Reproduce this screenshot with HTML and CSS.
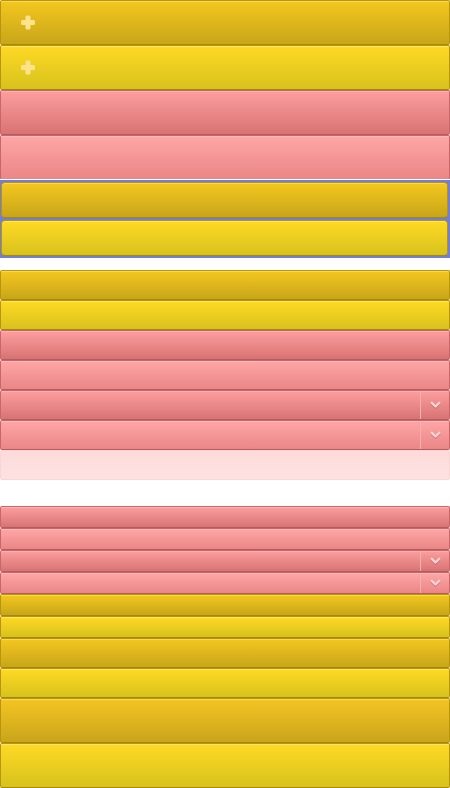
FILE: index.html
```html
<!DOCTYPE html>
<html>
<head>
<meta charset="utf-8">
<link rel="stylesheet" href="styles.css">
</head>
<body>
<div class="page">
  <div class="btn y1 h45 icon"><svg class="plus" width="14" height="15" viewBox="0 0 14 15"><rect x="4.5" y="0.5" width="5" height="14" rx="1.5"/><rect x="0" y="5" width="14" height="5" rx="1.5"/></svg></div>
  <div class="btn y2 h45 icon"><svg class="plus" width="14" height="15" viewBox="0 0 14 15"><rect x="4.5" y="0.5" width="5" height="14" rx="1.5"/><rect x="0" y="5" width="14" height="5" rx="1.5"/></svg></div>
  <div class="btn p1 h45"></div>
  <div class="btn p2 h45"></div>

  <div class="group">
    <div class="btn y1 h36 round"></div>
    <div class="btn y2 h36 round"></div>
  </div>

  <div class="section s2">
    <div class="btn y1 h30"></div>
    <div class="btn y2 h30"></div>
    <div class="btn p1 h30"></div>
    <div class="btn p2 h30"></div>
    <div class="btn p1 h30 select"><span class="arrow"><svg width="11" height="8" viewBox="0 0 11 8"><path d="M1.8 1.8 L5.5 5.5 L9.2 1.8"/></svg></span></div>
    <div class="btn p2 h30 select"><span class="arrow"><svg width="11" height="8" viewBox="0 0 11 8"><path d="M1.8 1.8 L5.5 5.5 L9.2 1.8"/></svg></span></div>
    <div class="btn p3 h30"></div>
  </div>

  <div class="section s3">
    <div class="btn p1 h22"></div>
    <div class="btn p2 h22"></div>
    <div class="btn p1 h22 select"><span class="arrow"><svg width="11" height="8" viewBox="0 0 11 8"><path d="M1.8 1.8 L5.5 5.5 L9.2 1.8"/></svg></span></div>
    <div class="btn p2 h22 select"><span class="arrow"><svg width="11" height="8" viewBox="0 0 11 8"><path d="M1.8 1.8 L5.5 5.5 L9.2 1.8"/></svg></span></div>
    <div class="btn y1 h22"></div>
    <div class="btn y2 h22"></div>
    <div class="btn y1 h30"></div>
    <div class="btn y2 h30"></div>
    <div class="btn y3 h45"></div>
    <div class="btn y2 h45"></div>
  </div>
</div>
</body>
</html>
```

FILE: styles.css
```css
html, body {
  margin: 0;
  padding: 0;
  background: #ffffff;
  font-family: "Liberation Sans", Arial, sans-serif;
}

.page {
  width: 450px;
  display: flex;
  flex-direction: column;
}

.btn {
  box-sizing: border-box;
  width: 100%;
  border: 1px solid;
  border-radius: 2px;
  display: flex;
  align-items: center;
}

.h45 { height: 45px; }
.h36 { height: 36px; }
.h30 { height: 30px; }
.h22 { height: 22px; }

.y1 {
  background: linear-gradient(#f4c71f, #c8a61a);
  border-color: #b8950c #b8950c #a98709;
  box-shadow: inset 0 1px 0 rgba(255, 240, 150, 0.45);
}

.y2 {
  background: linear-gradient(#ffd924, #d7c21d);
  border-color: #b8950c #b8950c #a98709;
  box-shadow: inset 0 1px 0 rgba(255, 245, 170, 0.5);
}

.y3 {
  background: linear-gradient(#f5c424, #c9a51b);
  border-color: #b8950c #b8950c #a98709;
  box-shadow: inset 0 1px 0 rgba(255, 240, 150, 0.45);
}

.p1 {
  background: linear-gradient(#fd9e9e, #d87373);
  border-color: #c8666a #c8666a #b95a5e;
  box-shadow: inset 0 1px 0 rgba(255, 200, 200, 0.5);
}

.p2 {
  background: linear-gradient(#ffa6a6, #ea8686);
  border-color: #c8666a #c8666a #b95a5e;
  box-shadow: inset 0 1px 0 rgba(255, 210, 210, 0.5);
}

.p3 {
  background: linear-gradient(#fedada, #fde2e2);
  border-color: #fbd4d4;
}

.icon {
  padding-left: 20px;
}

.plus {
  display: block;
  fill: #fce38c;
}

.group {
  background: #6f7ed8;
  padding: 2px 2px 2px 1px;
  display: flex;
  flex-direction: column;
  gap: 2px;
  border-top: 1px solid #ffffff;
  margin-top: -1px;
}

.group .round {
  border-radius: 4px;
}

.s2 {
  margin-top: 12px;
}

.s3 {
  margin-top: 26px;
}

.section {
  display: flex;
  flex-direction: column;
}

.select {
  justify-content: flex-end;
}

.arrow {
  box-sizing: border-box;
  width: 29px;
  height: 100%;
  border-left: 1px solid #fbb0b0;
  display: flex;
  align-items: center;
  justify-content: center;
}

.arrow svg {
  display: block;
  fill: none;
  stroke: #fcd3d6;
  stroke-width: 2.4;
  stroke-linecap: round;
  stroke-linejoin: round;
  filter: drop-shadow(0 1px 0 rgba(180, 70, 80, 0.5));
}
```
